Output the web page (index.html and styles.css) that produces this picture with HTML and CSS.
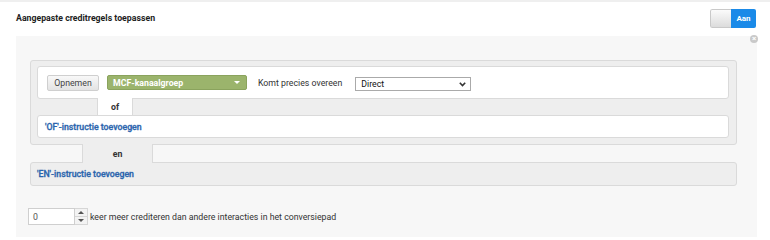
FILE: index.html
```html
<!DOCTYPE html>
<html lang="nl">
<head>
<meta charset="utf-8">
<title>Aangepaste creditregels</title>
<link rel="stylesheet" href="styles.css">
</head>
<body>
<div class="topline"></div>
<header class="head">
  <h1 class="title">Aangepaste creditregels toepassen</h1>
  <div class="toggle"><span class="toggle-knob"></span><span class="toggle-on">Aan</span></div>
</header>
<section class="panel">
  <span class="close" aria-label="Sluiten">&#215;</span>
  <div class="group">
    <div class="cond">
      <button class="btn">Opnemen</button>
      <div class="gselect"><span>MCF-kanaalgroep</span><span class="tri"></span></div>
      <span class="label">Komt precies overeen</span>
      <div class="select"><span>Direct</span>
        <svg class="chev" width="7" height="5" viewBox="0 0 7 5"><path d="M0.8 0.8 L3.5 3.6 L6.2 0.8" fill="none" stroke="#333" stroke-width="1.6"/></svg>
      </div>
    </div>
    <div class="conn conn-of">
      <div class="seg seg-l"></div>
      <div class="tab">of</div>
      <div class="seg seg-r"></div>
    </div>
    <div class="addor"><a class="link">'OF'-instructie toevoegen</a></div>
  </div>
  <div class="conn conn-en">
    <div class="seg seg-l"></div>
    <div class="tab">en</div>
    <div class="seg seg-r"></div>
  </div>
  <div class="adden"><a class="link">'EN'-instructie toevoegen</a></div>
  <div class="countrow">
    <div class="num"><span class="num-val">0</span></div>
    <div class="spin"><span class="spin-up"></span><span class="spin-down"></span></div>
    <span class="count-text">keer meer crediteren dan andere interacties in het conversiepad</span>
  </div>
</section>
</body>
</html>
```
FILE: styles.css
```css
* { box-sizing: border-box; }
html, body { margin: 0; padding: 0; background: #fff; }
body {
  width: 770px;
  height: 237px;
  overflow: hidden;
  font-family: Roboto, "Liberation Sans", Arial, sans-serif;
  font-size: 8.75px;
  color: #333;
}
.topline { height: 2px; background: #efefef; }
.head {
  height: 34px;
  display: flex;
  align-items: center;
  justify-content: space-between;
  padding: 0 14px 2px 16px;
}
.title { margin: 0; font-size: 8.75px; font-weight: 700; color: #1e1e1e; }
.toggle {
  display: flex;
  height: 19px;
  width: 46px;
  border-radius: 2px;
  overflow: hidden;
  margin-top: 1px;
}
.toggle-knob {
  width: 21px;
  background: linear-gradient(#fbfbfb, #dcdcdc);
  border: 1px solid #c9c9c9;
  border-right: none;
  border-radius: 2px 0 0 2px;
}
.toggle-on {
  flex: 1;
  background: #1a8ae8;
  color: #fff;
  font-weight: 700;
  font-size: 8px;
  display: flex;
  align-items: center;
  justify-content: center;
}
.panel {
  position: relative;
  margin-left: 16px;
  width: 741px;
  height: 201px;
  background: #f7f7f7;
  padding: 24px 20px 0 14px;
}
.close {
  position: absolute;
  top: -1px;
  right: -1px;
  width: 8px;
  height: 8px;
  border-radius: 50%;
  background: #c9c9c9;
  color: #fff;
  font-size: 8px;
  line-height: 8px;
  text-align: center;
  font-weight: 700;
}
.group {
  background: #eeeeee;
  border: 1px solid #dadada;
  border-radius: 3px;
  padding: 5px 7px 6px 6px;
}
.cond {
  height: 33px;
  background: #fff;
  border: 1px solid #dadada;
  border-radius: 3px;
  display: flex;
  align-items: center;
  padding: 0 9px;
}
.btn {
  font-family: inherit;
  font-size: 8.75px;
  color: #444;
  height: 16px;
  width: 52px;
  padding: 0;
  margin: 0;
  border: 1px solid #cfcfcf;
  border-radius: 2px;
  background: linear-gradient(#f8f8f8, #e3e3e3);
}
.gselect {
  margin-left: 8px;
  width: 140px;
  height: 15px;
  background: #9bb46c;
  border: 1px solid #8aa35d;
  border-radius: 2px;
  color: #fff;
  font-weight: 700;
  display: flex;
  align-items: center;
  justify-content: space-between;
  padding: 0 6px 0 5px;
}
.tri {
  width: 0; height: 0;
  border-left: 3px solid transparent;
  border-right: 3px solid transparent;
  border-top: 3px solid #fff;
}
.label { margin-left: 11px; color: #333; }
.select {
  margin-left: 13px;
  width: 116px;
  height: 14px;
  margin-top: 3px;
  border: 1px solid #aaa;
  background: #fff;
  display: flex;
  align-items: center;
  justify-content: space-between;
  padding: 0 4px 0 5px;
  color: #111;
}
.conn { display: flex; height: 16px; }
.conn-of .seg-l { width: 61px; border-right: 1px solid #dadada; }
.conn-of .tab {
  width: 34px;
  background: #fff;
  margin-top: -1px;
  font-weight: 700;
  color: #333;
  display: flex;
  align-items: center;
  justify-content: center;
  padding-top: 1px;
}
.conn-of .seg-r { flex: 1; border-left: 1px solid #dadada; }
.addor {
  height: 23px;
  background: #fff;
  border: 1px solid #dadada;
  border-radius: 3px;
  display: flex;
  align-items: center;
  padding-left: 7px;
}
.link { color: #2a64ad; font-weight: 500; -webkit-text-stroke: 0.3px #2a64ad; }
.conn-en { height: 17px; }
.conn-en .seg-l { width: 53px; border-right: 1px solid #dadada; }
.conn-en .tab {
  width: 69px;
  background: #eeeeee;
  margin: -1px 0;
  position: relative;
  z-index: 1;
  font-weight: 700;
  color: #333;
  display: flex;
  align-items: center;
  justify-content: center;
}
.conn-en .seg-r { flex: 1; border-left: 1px solid #dadada; }
.adden {
  height: 24px;
  background: #eeeeee;
  border: 1px solid #dadada;
  border-radius: 3px;
  display: flex;
  align-items: center;
  padding-left: 6px;
}
.countrow {
  display: flex;
  align-items: center;
  margin-top: 22px;
  margin-left: -2px;
}
.num {
  width: 47px;
  height: 17px;
  border: 1px solid #cfcfcf;
  background: #fff;
  display: flex;
  align-items: center;
  padding-left: 4px;
  color: #555;
}
.spin {
  width: 13px;
  height: 17px;
  display: flex;
  flex-direction: column;
  border: 1px solid #d6d6d6;
  border-left: none;
  background: #f3f3f3;
}
.spin-up, .spin-down {
  flex: 1;
  position: relative;
}
.spin-up { border-bottom: 1px solid #d6d6d6; }
.spin-up::after, .spin-down::after {
  content: "";
  position: absolute;
  left: 3px;
  top: 2px;
  border-left: 3px solid transparent;
  border-right: 3px solid transparent;
}
.spin-up::after { border-bottom: 3px solid #555; }
.spin-down::after { border-top: 3px solid #555; }
.count-text { margin-left: 2px; color: #333; }
```
